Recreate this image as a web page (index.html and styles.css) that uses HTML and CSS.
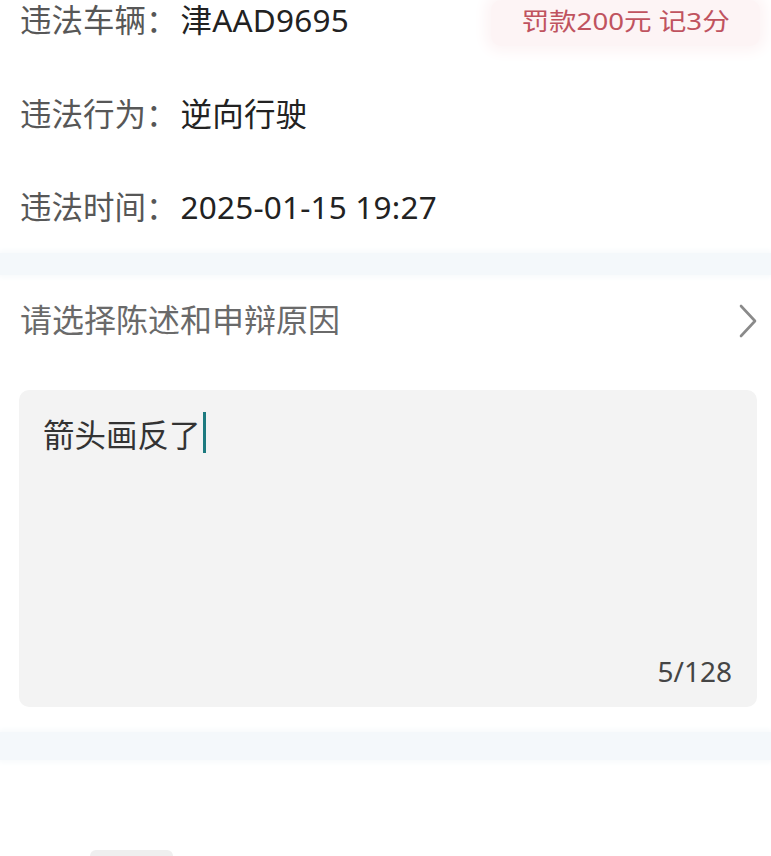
FILE: index.html
```html
<!DOCTYPE html>
<html lang="zh-CN">
<head>
<meta charset="utf-8">
<title>陈述和申辩</title>
<link rel="stylesheet" href="styles.css">
</head>
<body>
<div class="page">
  <section class="info">
    <div class="row row-first">
      <span class="label">违法车辆：</span><span class="value">津AAD9695</span>
      <span class="badge"><span class="badge-text">罚款200元 记3分</span></span>
    </div>
    <div class="row">
      <span class="label">违法行为：</span><span class="value">逆向行驶</span>
    </div>
    <div class="row row-last">
      <span class="label">违法时间：</span><span class="value">2025-01-15 19:27</span>
    </div>
  </section>
  <div class="gap gap-top"></div>
  <section class="reason">
    <span class="placeholder">请选择陈述和申辩原因</span>
    <svg class="chevron" width="20" height="34" viewBox="0 0 20 34" aria-hidden="true">
      <path d="M3 2 L17 17 L3 32" fill="none" stroke="#8a8a8a" stroke-width="2.6" stroke-linecap="round" stroke-linejoin="round"/>
    </svg>
  </section>
  <section class="statement">
    <div class="box">
      <div class="input">箭头画反了<span class="caret"></span></div>
      <div class="count">5/128</div>
    </div>
  </section>
  <div class="gap gap-bottom"></div>
  <footer class="footer"><span class="footer-tab"></span></footer>
</div>
</body>
</html>
```
FILE: styles.css
```css
html, body {
  margin: 0;
  padding: 0;
  background: #ffffff;
  overflow: hidden;
}
body {
  font-family: "Noto Sans", "Noto Sans CJK SC", sans-serif;
  color: #222;
}
.page {
  width: 771px;
  height: 856px;
  overflow: hidden;
  display: flex;
  flex-direction: column;
}
.info {
  display: flex;
  flex-direction: column;
}
.row {
  height: 94px;
  box-sizing: border-box;
  display: flex;
  align-items: center;
  padding: 0 11px 0 20px;
  font-size: 31.5px;
  line-height: 30px;
}
.row-first {
  height: 67px;
  align-items: flex-start;
  padding-top: 5px;
}
.row-last {
  height: 92px;
}
.label {
  color: #575757;
  margin-right: 3px;
}
.value {
  color: #222;
  letter-spacing: 0.2px;
}
.badge {
  margin-left: auto;
  margin-top: -5px;
  height: 30px;
  padding: 6px 44px 10px;
  background: #fdf4f5;
  box-shadow: 0 0 14px 6px #fdf4f5;
  border-radius: 10px;
  display: flex;
  align-items: center;
  justify-content: center;
}
.badge-text {
  font-size: 24px;
  line-height: 30px;
  color: #c0535f;
  white-space: nowrap;
  transform: scaleX(1.15);
  transform-origin: center;
}
.gap {
  background: #f4f8fb;
  flex: none;
}
.gap-top {
  height: 22px;
  box-shadow: 0 0 6px 2px #f6f9fb;
}
.gap-bottom {
  height: 28px;
  box-shadow: 0 0 6px 2px #f6f9fb;
}
.reason {
  height: 90px;
  display: flex;
  align-items: center;
  justify-content: space-between;
  padding: 0 13px 0 20px;
  flex: none;
}
.placeholder {
  font-size: 32px;
  line-height: 40px;
  color: #6a6a6a;
}
.chevron {
  display: block;
  margin-top: 2px;
}
.statement {
  padding: 25px 14px 25px 19px;
  flex: none;
}
.box {
  height: 317px;
  box-sizing: border-box;
  background: #f3f3f3;
  border-radius: 10px;
  padding: 25px 25px 18px 24px;
  display: flex;
  flex-direction: column;
  justify-content: space-between;
}
.input {
  font-size: 31.5px;
  line-height: 40px;
  color: #333;
  display: flex;
  align-items: center;
}
.caret {
  display: inline-block;
  width: 3px;
  height: 41px;
  margin-left: 2px;
  margin-top: -5px;
  background: #1d7a7f;
}
.count {
  align-self: flex-end;
  font-size: 28px;
  line-height: 36px;
  color: #454545;
}
.footer {
  flex: 1;
  display: flex;
  align-items: flex-end;
  padding-left: 90px;
}
.footer-tab {
  width: 83px;
  height: 6px;
  background: #efefef;
  border-radius: 6px 6px 0 0;
}
```
